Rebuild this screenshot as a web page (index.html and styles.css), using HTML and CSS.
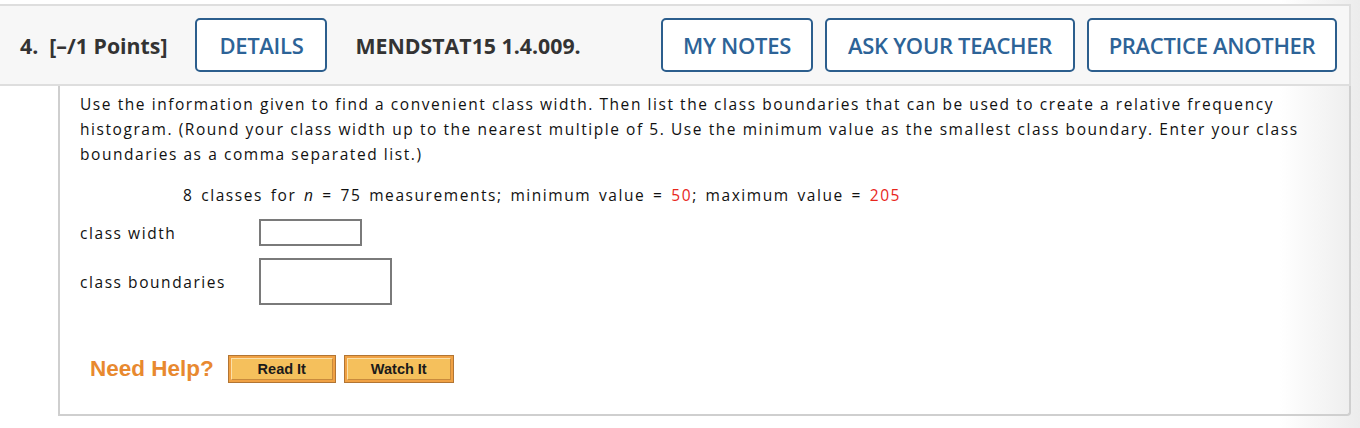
FILE: index.html
```html
<!DOCTYPE html>
<html>
<head>
<meta charset="utf-8">
<link rel="stylesheet" href="styles.css">
</head>
<body>
<div class="page">
  <div class="question">
    <div class="qhead">
      <span class="qnum">4.&nbsp; [–/1 Points]</span>
      <button class="hbtn details">DETAILS</button>
      <span class="qcode">MENDSTAT15 1.4.009.</span>
      <div class="hright">
        <button class="hbtn notes">MY NOTES</button>
        <button class="hbtn ask">ASK YOUR TEACHER</button>
        <button class="hbtn practice">PRACTICE ANOTHER</button>
      </div>
    </div>
    <div class="qbody">
      <p class="prompt">Use the information given to find a convenient class width. Then list the class boundaries that can be used to create a relative frequency histogram. (Round your class width up to the nearest multiple of 5. Use the minimum value as the smallest class boundary. Enter your class boundaries as a comma separated list.)</p>
      <p class="given">8 classes for <i>n</i> = 75 measurements; minimum value = <span class="red">50</span>; maximum value = <span class="red">205</span></p>
      <div class="row row1">
        <span class="label">class width</span>
        <span class="input small"></span>
      </div>
      <div class="row row2">
        <span class="label">class boundaries</span>
        <span class="input big"></span>
      </div>
      <div class="help">
        <span class="needhelp">Need Help?</span>
        <span class="obtn read"><span class="obtn-in">Read It</span></span>
        <span class="obtn watch"><span class="obtn-in">Watch It</span></span>
      </div>
    </div>
  </div>
</div>
</body>
</html>
```

FILE: styles.css
```css
html, body {
  margin: 0;
  padding: 0;
  background: #fff;
}
body {
  width: 1360px;
  height: 428px;
  overflow: hidden;
  background: linear-gradient(to right, #fff 0, #fff 1280px, #ececec 1360px);
}
.page {
  padding-top: 4px;
}
.question {
  width: 1351px;
}
.qhead {
  display: flex;
  align-items: center;
  height: 78px;
  background: #f7f7f7;
  border-top: 2px solid #dedede;
  border-right: 2px solid #dedede;
  border-bottom: 2px solid #dedede;
  padding-left: 20px;
  padding-right: 12px;
  font-family: "Open Sans", sans-serif;
}
.qnum, .qcode {
  font-weight: 700;
  font-size: 21.3px;
  color: #333;
}
.qnum { margin-right: 28px; }
.qcode { margin-left: 28px; }
.hbtn {
  height: 54px;
  box-sizing: border-box;
  border: 2px solid #2c5e8d;
  border-radius: 5px;
  background: #fff;
  color: #2d6397;
  font-family: "Open Sans", sans-serif;
  font-weight: 600;
  font-size: 22px;
  letter-spacing: -0.3px;
  padding: 0;
  margin: 0;
}
.details { width: 132px; }
.hright {
  margin-left: auto;
  display: flex;
  gap: 12px;
}
.notes { width: 152px; }
.ask { width: 250px; }
.practice { width: 250px; }

.qbody {
  margin-left: 58px;
  border-left: 2px solid #cfcfcf;
  border-right: 2px solid #cfcfcf;
  border-bottom: 2px solid #cfcfcf;
  border-bottom-right-radius: 4px;
  height: 330px;
  box-sizing: border-box;
  padding: 6px 20px 0 20px;
  font-family: "Open Sans", sans-serif;
  font-size: 15.5px;
  letter-spacing: 1.56px;
  color: #111;
}
.prompt {
  margin: 0;
  line-height: 25px;
}
.given {
  margin: 16px 0 0 103px;
  line-height: 25px;
  word-spacing: 2.2px;
}
.red { color: #e8261c; }
.row {
  display: flex;
  align-items: center;
}
.label {
  width: 179px;
  flex: none;
}
.row1 { margin-top: 11px; }
.row2 { margin-top: 12px; }
.input {
  display: block;
  box-sizing: border-box;
  border: 2px solid #7a7a7a;
  background: #fff;
}
.small { width: 103px; height: 27px; }
.big { width: 133px; height: 47px; }
.help {
  display: flex;
  align-items: center;
  margin-top: 50px;
  margin-left: 10px;
  letter-spacing: 0;
}
.needhelp {
  font-family: "Liberation Sans", Arial, sans-serif;
  font-weight: 700;
  font-size: 22.5px;
  color: #e8892f;
  margin-right: 14px;
}
.obtn {
  display: block;
  box-sizing: border-box;
  height: 28px;
  border: 1px solid #b27533;
  background: #f0a144;
  padding: 2px;
  margin-right: 8px;
}
.obtn-in {
  display: flex;
  align-items: center;
  justify-content: center;
  height: 100%;
  box-sizing: border-box;
  border: 1px solid #c98a3c;
  border-top-color: #fbe0a8;
  border-left-color: #fbe0a8;
  background: #f5c05c;
  font-family: "Liberation Sans", Arial, sans-serif;
  font-weight: 700;
  font-size: 14.5px;
  color: #1a1a1a;
}
.read { width: 108px; }
.watch { width: 110px; }
```
